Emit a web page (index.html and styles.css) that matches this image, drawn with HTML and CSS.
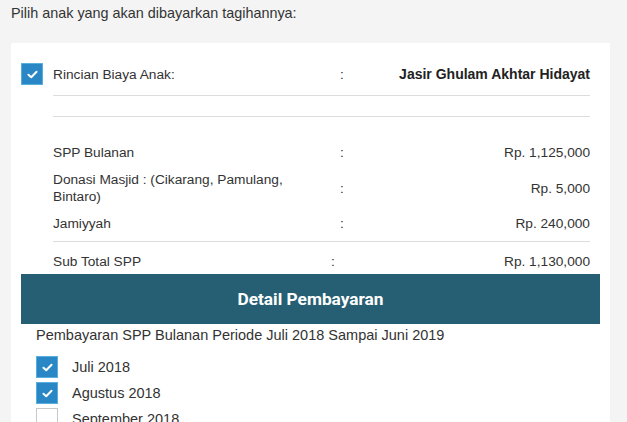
FILE: index.html
```html
<!DOCTYPE html>
<html>
<head>
<meta charset="utf-8">
<link rel="stylesheet" href="styles.css">
</head>
<body>
<p class="intro">Pilih anak yang akan dibayarkan tagihannya:</p>
<div class="card">
  <div class="child">
    <span class="cb checked"><svg viewBox="0 0 12 10" width="11" height="9"><path d="M1.5 5.2 L4.6 8 L10.5 2" fill="none" stroke="#fff" stroke-width="2.2" stroke-linecap="round" stroke-linejoin="round"/></svg></span>
    <div class="detail">
      <div class="row head">
        <span class="lbl">Rincian Biaya Anak:</span>
        <span class="colon">:</span>
        <span class="val name">Jasir Ghulam Akhtar Hidayat</span>
      </div>
      <div class="spacer"></div>
      <div class="items">
        <div class="row">
          <span class="lbl">SPP Bulanan</span>
          <span class="colon">:</span>
          <span class="val">Rp. 1,125,000</span>
        </div>
        <div class="row">
          <span class="lbl">Donasi Masjid : (Cikarang, Pamulang, Bintaro)</span>
          <span class="colon">:</span>
          <span class="val">Rp. 5,000</span>
        </div>
        <div class="row">
          <span class="lbl">Jamiyyah</span>
          <span class="colon">:</span>
          <span class="val">Rp. 240,000</span>
        </div>
      </div>
      <div class="row total">
        <span class="lbl">Sub Total SPP</span>
        <span class="colon">:</span>
        <span class="val">Rp. 1,130,000</span>
      </div>
    </div>
  </div>
  <div class="band">Detail Pembayaran</div>
  <div class="payment">
    <p class="period">Pembayaran SPP Bulanan Periode Juli 2018 Sampai Juni 2019</p>
    <ul class="months">
      <li><span class="cb checked"><svg viewBox="0 0 12 10" width="11" height="9"><path d="M1.5 5.2 L4.6 8 L10.5 2" fill="none" stroke="#fff" stroke-width="2.2" stroke-linecap="round" stroke-linejoin="round"/></svg></span>Juli 2018</li>
      <li><span class="cb checked"><svg viewBox="0 0 12 10" width="11" height="9"><path d="M1.5 5.2 L4.6 8 L10.5 2" fill="none" stroke="#fff" stroke-width="2.2" stroke-linecap="round" stroke-linejoin="round"/></svg></span>Agustus 2018</li>
      <li><span class="cb"></span>September 2018</li>
    </ul>
  </div>
</div>
</body>
</html>
```

FILE: styles.css
```css
html, body {
  margin: 0;
  padding: 0;
  background: #f4f4f4;
  font-family: "Liberation Sans", Arial, sans-serif;
  color: #333;
  overflow: hidden;
}
.intro {
  margin: 0;
  padding: 3px 11px 0;
  font-size: 14.4px;
  line-height: 20px;
  height: 40px;
}
.card {
  background: #fff;
  margin-left: 11px;
  width: 599px;
  padding: 20px 10px 0;
  box-sizing: border-box;
}
.child {
  display: flex;
  gap: 10px;
}
.cb {
  flex: none;
  width: 22px;
  height: 22px;
  box-sizing: border-box;
  border: 1px solid #c8c8c8;
  background: #fff;
  display: flex;
  align-items: center;
  justify-content: center;
}
.cb.checked {
  background: #2a87c6;
  border-color: #5badde;
}
.detail {
  flex: 1;
  padding-right: 10px;
  font-size: 13.7px;
  line-height: 17px;
}
.row {
  display: flex;
  align-items: center;
}
.lbl {
  width: 287px;
  padding-right: 10px;
  box-sizing: border-box;
  flex: none;
}
.colon {
  width: 20px;
  flex: none;
}
.val {
  flex: 1;
  text-align: right;
}
.name {
  font-weight: bold;
  font-size: 14px;
  color: #222;
}
.row.head {
  height: 22px;
  padding-bottom: 10px;
  border-bottom: 1px solid #ddd;
}
.spacer {
  height: 20px;
  border-bottom: 1px solid #ddd;
}
.items {
  padding-top: 22px;
  padding-bottom: 4px;
  border-bottom: 1px solid #ddd;
}
.items .row {
  padding: 5px 0;
}
.row.total {
  padding: 11px 0 4px;
}
.row.total .lbl {
  width: 278px;
}
.band {
  height: 50px;
  background: #265f74;
  color: #fff;
  font-family: Roboto, "Liberation Sans", sans-serif;
  font-weight: bold;
  font-size: 17.3px;
  display: flex;
  align-items: center;
  justify-content: center;
}
.payment {
  padding: 1px 5px 0 15px;
  font-size: 14.5px;
  line-height: 20px;
}
.period {
  margin: 0 0 11px;
}
.months {
  list-style: none;
  margin: 0;
  padding: 0;
  display: flex;
  flex-direction: column;
  gap: 4px;
}
.months li {
  display: flex;
  align-items: center;
  gap: 14px;
  height: 22px;
}
```
